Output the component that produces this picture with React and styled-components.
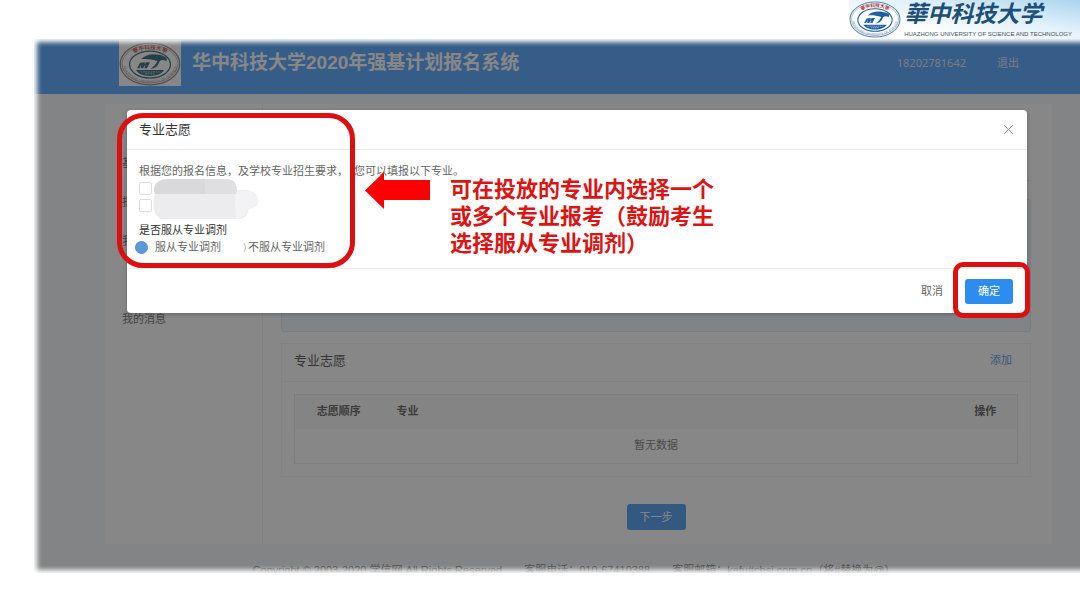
import React from 'react'
import styled, { createGlobalStyle } from 'styled-components'

const GlobalStyle = createGlobalStyle`
  * {
    box-sizing: border-box;
  }
  body {
    margin: 0;
    background: #fff;
    color: #666;
    font-family: "Liberation Sans", "Noto Sans CJK SC", sans-serif;
    font-size: 11px;
    line-height: 17px;
  }
  button, input {
    font-family: inherit;
    margin: 0;
  }
`

const Page = styled.div`
  padding-bottom: 35px;
  overflow: hidden;
`

const Banner = styled.div`
  display: flex;
  justify-content: flex-end;
  height: 39px;
`

const School = styled.div`
  display: flex;
  align-items: center;
  gap: 3px;
  padding-right: 8px;
  background: linear-gradient(10deg, #fff 25%, #e2f1fa 60%, #a9d5ee 100%);
`

const SchoolName = styled.div`
  color: #1d4f78;
  font-family: "Liberation Serif", "Noto Sans CJK TC", sans-serif;
  font-size: 23px;
  font-style: italic;
  font-weight: 700;
  line-height: 28px;
  white-space: nowrap;
`

const SchoolLatin = styled.div`
  color: #3b5266;
  font-size: 6px;
  line-height: 10px;
  white-space: nowrap;
`

const Screen = styled.div`
  position: relative;
  margin-left: 34px;
  background: #f4f8fc;
  overflow: hidden;
`

// white fade on the left, top and bottom edges
const Feather = styled.div`
  position: absolute;
  inset: 0 -14px 0 0;
  box-shadow: inset 0 0 5px 3px #fff;
  pointer-events: none;
`

const SiteHeader = styled.header`
  display: flex;
  align-items: center;
  gap: 11px;
  height: 55px;
  padding: 0 61px 8px 85px;
  background: #3597ff;
`

const SealBox = styled.div`
  display: flex;
  padding-top: 2px;
  background: #fff;
`

const SiteTitle = styled.h1`
  flex: 1;
  margin: 0;
  color: #fff;
  font-size: 19px;
  line-height: 28px;
`

const Account = styled.div`
  display: flex;
  gap: 31px;
  color: #d5e3f3;
  font-family: "Noto Sans", "Noto Sans CJK SC", sans-serif;
  > a {
    color: inherit;
    text-decoration: none;
  }
`

const Main = styled.main`
  display: flex;
  margin: 10px 28px 0 71px;
  min-height: 440px;
  background: #fff;
`

const Sidebar = styled.nav`
  width: 158px;
  padding: 40px 0 0 17px;
  border-right: 1px solid #eee;
`

const NavItem = styled.a`
  display: block;
  margin-top: ${p => (p.$apart ? '39px' : 0)};
  color: #555;
  line-height: 39px;
  text-decoration: none;
`

const Content = styled.div`
  flex: 1;
  padding: 0 21px 14px 18px;
  display: flex;
  flex-direction: column;
`

const Summary = styled.div`
  height: 77px;
  border-bottom: 1px solid #f0f0f0;
`

const Notice = styled.div`
  height: 133px;
  margin: 18px 0 11px;
  border: 1px solid #d5e6f5;
  border-radius: 3px;
  background: #eef7ff;
`

const Panel = styled.section`
  border: 1px solid #f3f3f3;
`

const PanelHead = styled.div`
  display: flex;
  justify-content: space-between;
  align-items: center;
  padding: 0 18px 4px 12px;
  height: 38px;
  border-bottom: 1px solid #f0f0f0;
  > h2 {
    margin: 0;
    color: #333;
    font-size: 13px;
    font-weight: 400;
  }
  > a {
    color: #3b86ea;
    text-decoration: none;
  }
`

const TableWrap = styled.div`
  padding: 12px;
`

const Table = styled.table`
  width: 100%;
  border: 1px solid #e6e7ea;
  border-collapse: collapse;
  table-layout: fixed;
  th {
    height: 34px;
    padding: 0;
    background: #f8f8f9;
    color: #444;
  }
  td {
    height: 35px;
    padding: 0;
    text-align: center;
  }
`

const Th = styled.th`
  width: ${p => p.$width || 'auto'};
  text-align: ${p => (p.$width ? 'center' : 'left')};
  text-indent: ${p => (p.$width ? 0 : '14px')};
`

const Button = styled.button`
  height: ${p => (p.$wide ? '26px' : '25px')};
  padding: 0 13px;
  border: 0;
  border-radius: 3px;
  background: ${p => (p.$plain ? 'transparent' : '#2d8cf0')};
  color: ${p => (p.$plain ? '#666' : '#fff')};
  font-size: 11px;
  line-height: 17px;
`

const Next = styled.div`
  display: flex;
  justify-content: center;
  padding-top: 27px;
`

const Footer = styled.footer`
  display: flex;
  justify-content: center;
  gap: 22px;
  height: 29px;
  padding: 18px 0 0 34px;
  white-space: nowrap;
`

const Mask = styled.div`
  position: absolute;
  inset: 0;
  padding: 71px 53px 0 93px;
  background: rgba(55, 55, 55, .6);
`

const Modal = styled.div`
  position: relative;
  border-radius: 4px;
  background: #fff;
  box-shadow: 0 1px 4px rgba(0, 0, 0, .25);
`

const ModalHead = styled.div`
  display: flex;
  justify-content: space-between;
  align-items: center;
  height: 40px;
  padding: 0 13px 0 12px;
  border-bottom: 1px solid #ececee;
  > h2 {
    margin: 0;
    color: #333;
    font-size: 13px;
    font-weight: 400;
  }
`

const Close = styled.button`
  display: flex;
  padding: 0;
  border: 0;
  background: none;
`

const ModalBody = styled.div`
  padding: 12px;
`

const Tip = styled.p`
  margin: 0;
  line-height: 18px;
  white-space: pre-wrap;
`

const Majors = styled.div`
  position: relative;
  margin-bottom: 8px;
`

const MajorRow = styled.label`
  display: flex;
  align-items: center;
  height: 17px;
  > input {
    appearance: none;
    width: 13px;
    height: 13px;
    border: 1px solid #dcdee2;
    border-radius: 2px;
    background: #fff;
  }
`

const Smudge = styled.svg`
  position: absolute;
  left: 12px;
  top: -3px;
`

const Fieldset = styled.fieldset`
  margin: 0;
  padding: 0;
  border: 0;
  > legend {
    padding: 0;
    color: #333;
  }
`

const Choices = styled.div`
  display: flex;
  gap: 12px;
  margin-left: -4px;
`

const Choice = styled.label`
  display: flex;
  align-items: center;
  gap: ${p => (p.$faded ? '2px' : '7px')};
  > input {
    appearance: none;
    width: 13px;
    height: 13px;
    border: 1px solid transparent;
    border-right-color: #b8bcc4;
    border-radius: 50%;
  }
  > input:checked {
    border-color: #4a90d9;
    background: #5b9bd5;
  }
`

const ModalFoot = styled.div`
  display: flex;
  justify-content: flex-end;
  align-items: center;
  gap: 9px;
  height: 45px;
  padding: 0 14px 0 0;
  border-top: 1px solid #ececee;
`

const Confirm = styled.div`
  position: relative;
  display: flex;
`

const RedFrame = styled.div`
  position: absolute;
  border: 5px solid #dc1010;
  pointer-events: none;
`

const OptionsFrame = styled(RedFrame)`
  left: -10px;
  top: 3px;
  width: 238px;
  height: 155px;
  border-radius: 26px;
`

const ConfirmFrame = styled(RedFrame)`
  inset: -17px -17px -14px -12px;
  border-radius: 10px;
`

const Callout = styled.div`
  position: absolute;
  left: 238px;
  top: 62px;
  display: flex;
  gap: 20px;
  > p {
    margin: 0;
    padding-top: 4px;
    color: #dc1414;
    font-size: 22px;
    font-weight: 700;
    line-height: 27px;
    white-space: nowrap;
  }
`

function Seal({ width, height, ring, ink, id }) {
  return (
    <svg width={width} height={height} viewBox="0 0 100 72" preserveAspectRatio="none">
      <defs>
        <path id={id + 'top'} d="M12 36a38 24 0 0 1 76 0" />
        <path id={id + 'bottom'} d="M6 36a44 31 0 0 0 88 0" />
      </defs>
      <ellipse cx="50" cy="36" rx="48" ry="34" fill="#fff" stroke={ring} strokeWidth="2" />
      <ellipse cx="50" cy="36" rx="45" ry="31" fill="none" stroke={ring} strokeWidth="1" />
      <ellipse cx="50" cy="37" rx="33" ry="22" fill="#fff" stroke={ink} strokeWidth="2" />
      <text fontSize="9" fontWeight="700" fill="#b8342c" textAnchor="middle">
        <textPath href={'#' + id + 'top'} startOffset="50%">華中科技大學</textPath>
      </text>
      <text fontSize="6" fill={ring} textAnchor="middle">
        <textPath href={'#' + id + 'bottom'} startOffset="50%">HUAZHONG UNIVERSITY OF SCIENCE</textPath>
      </text>
      <path d="M36 28c8-9 24-10 38-4 4 2 4 5 2 7-7-3-10-1-12 4-2 5-6 8-13 9 5-4 9-8 11-13-9-3-18-4-26-3z" fill={ink} />
      <path d="M34 34l-5 9h4l3-6-1 6h4l4-7-2 7h4l5-10-6 0-3 3 1-3zM27 46h46l-5 5c-11 6-25 6-36 0z" fill={ink} />
      <path d="M35 49h30M42 52h16" stroke="#fff" strokeWidth="1" strokeDasharray="3 1" />
    </svg>
  )
}

export default function App() {
  return (
    <Page>
      <GlobalStyle />
      <Banner>
        <School>
          <Seal id="banner" width={52} height={37} ring="#5a86ad" ink="#1d5f9e" />
          <div>
            <SchoolName>華中科技大学</SchoolName>
            <SchoolLatin>HUAZHONG UNIVERSITY OF SCIENCE AND TECHNOLOGY</SchoolLatin>
          </div>
        </School>
      </Banner>
      <Screen>
        <SiteHeader>
          <SealBox>
            <Seal id="site" width={62} height={44} ring="#7d6c6c" ink="#114c66" />
          </SealBox>
          <SiteTitle>华中科技大学2020年强基计划报名系统</SiteTitle>
          <Account>
            <span>18202781642</span>
            <a href="#logout">退出</a>
          </Account>
        </SiteHeader>
        <Main>
          <Sidebar>
            <NavItem href="#base">基本信息</NavItem>
            <NavItem href="#apply">报名信息</NavItem>
            <NavItem href="#mine">我的报名</NavItem>
            <NavItem href="#message" $apart>我的消息</NavItem>
          </Sidebar>
          <Content>
            <Summary />
            <Notice />
            <Panel>
              <PanelHead>
                <h2>专业志愿</h2>
                <a href="#add">添加</a>
              </PanelHead>
              <TableWrap>
                <Table>
                  <thead>
                    <tr>
                      <Th $width="88px">志愿顺序</Th>
                      <Th>专业</Th>
                      <Th $width="64px">操作</Th>
                    </tr>
                  </thead>
                  <tbody>
                    <tr>
                      <td colSpan={3}>暂无数据</td>
                    </tr>
                  </tbody>
                </Table>
              </TableWrap>
            </Panel>
            <Next>
              <Button $wide>下一步</Button>
            </Next>
          </Content>
        </Main>
        <Footer>
          <span>Copyright © 2003-2020 学信网 All Rights Reserved</span>
          <span>客服电话：010-67410388</span>
          <span>客服邮箱：kefu#chsi.com.cn（将#替换为@）</span>
        </Footer>
        <Mask>
          <Modal role="dialog" aria-label="专业志愿">
            <ModalHead>
              <h2>专业志愿</h2>
              <Close aria-label="关闭">
                <svg width="11" height="11" viewBox="0 0 11 11">
                  <path d="M1 1l9 9M10 1l-9 9" stroke="#999" strokeWidth="1" />
                </svg>
              </Close>
            </ModalHead>
            <ModalBody>
              <Tip>根据您的报名信息，及学校专业招生要求，  您可以填报以下专业。</Tip>
              <Majors>
                <MajorRow><input type="checkbox" aria-label="专业一" /></MajorRow>
                <MajorRow><input type="checkbox" aria-label="专业二" /></MajorRow>
                <Smudge width="110" height="44" viewBox="0 0 110 44">
                  <path d="M4 16C0 30 4 42 12 42h76c6 0 8-4 10-10 8-2 10-6 9-10-1-6-8-10-18-9L70 16z" fill="#ececee" />
                  <path d="M84 15c12-4 23 0 23 8 0 5-4 8-10 9-2 6-6 10-12 10z" fill="#f3f3f5" />
                  <path d="M3 14C3 5 9 2 18 2l58 0c8 1 11 6 9 15H4z" fill="#d9d9dc" />
                  <path d="M54 2h22c8 1 11 6 9 15H54z" fill="#dfdfe2" />
                </Smudge>
              </Majors>
              <Fieldset>
                <legend>是否服从专业调剂</legend>
                <Choices>
                  <Choice>
                    <input type="radio" name="adjust" defaultChecked />
                    服从专业调剂
                  </Choice>
                  <Choice $faded>
                    <input type="radio" name="adjust" />
                    不服从专业调剂
                  </Choice>
                </Choices>
              </Fieldset>
            </ModalBody>
            <ModalFoot>
              <Button $plain>取消</Button>
              <Confirm>
                <Button>确定</Button>
                <ConfirmFrame />
              </Confirm>
            </ModalFoot>
            <OptionsFrame />
            <Callout>
              <svg width="65" height="37" viewBox="0 0 65 37">
                <path d="M0 18.500L19 0v8h46v20H19v9z" fill="#fb0000" />
              </svg>
              <p>
                可在投放的专业内选择一个<br />
                或多个专业报考（鼓励考生<br />
                选择服从专业调剂）
              </p>
            </Callout>
          </Modal>
        </Mask>
        <Feather />
      </Screen>
    </Page>
  )
}
